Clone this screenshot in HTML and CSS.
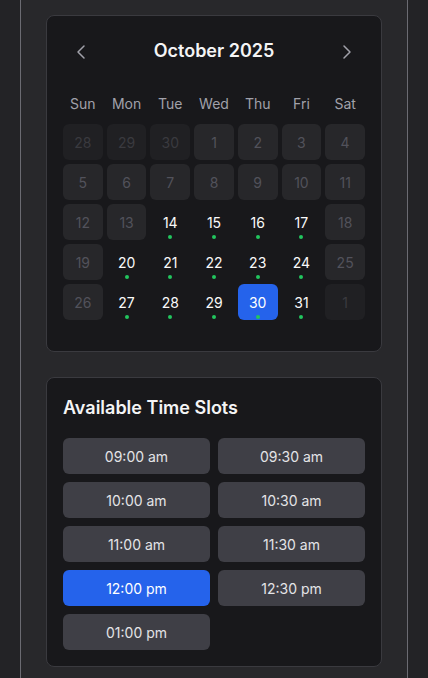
FILE: index.html
```html
<!DOCTYPE html>
<html lang="en">
<head>
<meta charset="utf-8">
<title>Booking</title>
<link rel="stylesheet" href="styles.css">
</head>
<body>
<div class="page">
  <section class="card calendar">
    <div class="cal-head">
      <button class="nav" aria-label="Previous month">
        <svg width="24" height="24" viewBox="0 0 24 24" fill="none" stroke="currentColor" stroke-width="1.5" stroke-linecap="round" stroke-linejoin="round"><path d="m15 18-6-6 6-6"/></svg>
      </button>
      <h2 class="month">October 2025</h2>
      <button class="nav" aria-label="Next month">
        <svg width="24" height="24" viewBox="0 0 24 24" fill="none" stroke="currentColor" stroke-width="1.5" stroke-linecap="round" stroke-linejoin="round"><path d="m9 18 6-6-6-6"/></svg>
      </button>
    </div>
    <div class="weekdays">
      <span>Sun</span><span>Mon</span><span>Tue</span><span>Wed</span><span>Thu</span><span>Fri</span><span>Sat</span>
    </div>
    <div class="days">
      <div class="day other">28</div>
      <div class="day other">29</div>
      <div class="day other">30</div>
      <div class="day off">1</div>
      <div class="day off">2</div>
      <div class="day off">3</div>
      <div class="day off">4</div>

      <div class="day off">5</div>
      <div class="day off">6</div>
      <div class="day off">7</div>
      <div class="day off">8</div>
      <div class="day off">9</div>
      <div class="day off">10</div>
      <div class="day off">11</div>

      <div class="day off">12</div>
      <div class="day off">13</div>
      <div class="day avail">14<i class="dot"></i></div>
      <div class="day avail">15<i class="dot"></i></div>
      <div class="day avail">16<i class="dot"></i></div>
      <div class="day avail">17<i class="dot"></i></div>
      <div class="day off">18</div>

      <div class="day off">19</div>
      <div class="day avail">20<i class="dot"></i></div>
      <div class="day avail">21<i class="dot"></i></div>
      <div class="day avail">22<i class="dot"></i></div>
      <div class="day avail">23<i class="dot"></i></div>
      <div class="day avail">24<i class="dot"></i></div>
      <div class="day off">25</div>

      <div class="day off">26</div>
      <div class="day avail">27<i class="dot"></i></div>
      <div class="day avail">28<i class="dot"></i></div>
      <div class="day avail">29<i class="dot"></i></div>
      <div class="day avail selected">30<i class="dot"></i></div>
      <div class="day avail">31<i class="dot"></i></div>
      <div class="day other">1</div>
    </div>
  </section>

  <section class="card slots">
    <h3 class="slots-title">Available Time Slots</h3>
    <div class="slot-grid">
      <button class="slot">09:00 am</button>
      <button class="slot">09:30 am</button>
      <button class="slot">10:00 am</button>
      <button class="slot">10:30 am</button>
      <button class="slot">11:00 am</button>
      <button class="slot">11:30 am</button>
      <button class="slot active">12:00 pm</button>
      <button class="slot">12:30 pm</button>
      <button class="slot">01:00 pm</button>
    </div>
  </section>
</div>
</body>
</html>
```

FILE: styles.css
```css
* { box-sizing: border-box; }

html, body {
  margin: 0;
  padding: 0;
  background: #232326;
  font-family: Inter, "Noto Sans", sans-serif;
  color: #f4f4f5;
}

.page {
  margin: 0 20px;
  min-height: 678px;
  background: #28282b;
  border-left: 1px solid #6b6b72;
  border-right: 1px solid #6b6b72;
  padding: 15px 25px 20px;
  display: flex;
  flex-direction: column;
  gap: 25px;
}

.card {
  background: #18181b;
  border: 1px solid #3a3a3f;
  border-radius: 8px;
  padding: 16px;
}

.calendar { padding-bottom: 31px; }

.cal-head {
  height: 37px;
  display: flex;
  align-items: center;
  justify-content: space-between;
}

.nav {
  width: 36px;
  height: 36px;
  padding: 0;
  border: 0;
  background: transparent;
  color: #a1a1aa;
  display: flex;
  align-items: center;
  justify-content: center;
  cursor: pointer;
  position: relative;
  top: 1px;
}

.month {
  margin: 0;
  font-size: 18px;
  font-weight: 600;
  color: #f4f4f5;
  line-height: 28px;
}

.weekdays,
.days {
  display: grid;
  grid-template-columns: repeat(7, 1fr);
  column-gap: 4px;
}

.weekdays {
  margin-top: 25px;
  margin-bottom: 10px;
}

.weekdays span {
  text-align: center;
  font-size: 14px;
  line-height: 20px;
  color: #a1a1aa;
}

.days { row-gap: 4px; }

.day {
  position: relative;
  height: 36px;
  border-radius: 6px;
  display: flex;
  align-items: center;
  justify-content: center;
  font-size: 14px;
  color: #fafafa;
}

.day.off {
  background: #27272a;
  color: #52525b;
}

.day.other {
  background: #202023;
  color: #3a3a3f;
}

.day.selected {
  background: #2563eb;
  color: #ffffff;
}

.dot {
  position: absolute;
  left: 50%;
  bottom: 1px;
  width: 4px;
  height: 4px;
  margin-left: -2px;
  border-radius: 50%;
  background: #22c55e;
}

.slots-title {
  margin: 0 0 16px;
  font-size: 18px;
  line-height: 28px;
  font-weight: 600;
  color: #f4f4f5;
}

.slot-grid {
  display: grid;
  grid-template-columns: 1fr 1fr;
  gap: 8px;
}

.slot {
  height: 36px;
  border: 0;
  border-radius: 6px;
  background: #3f3f46;
  color: #e4e4e7;
  font-family: inherit;
  font-size: 14px;
  cursor: pointer;
}

.slot.active {
  background: #2563eb;
  color: #ffffff;
}
```
